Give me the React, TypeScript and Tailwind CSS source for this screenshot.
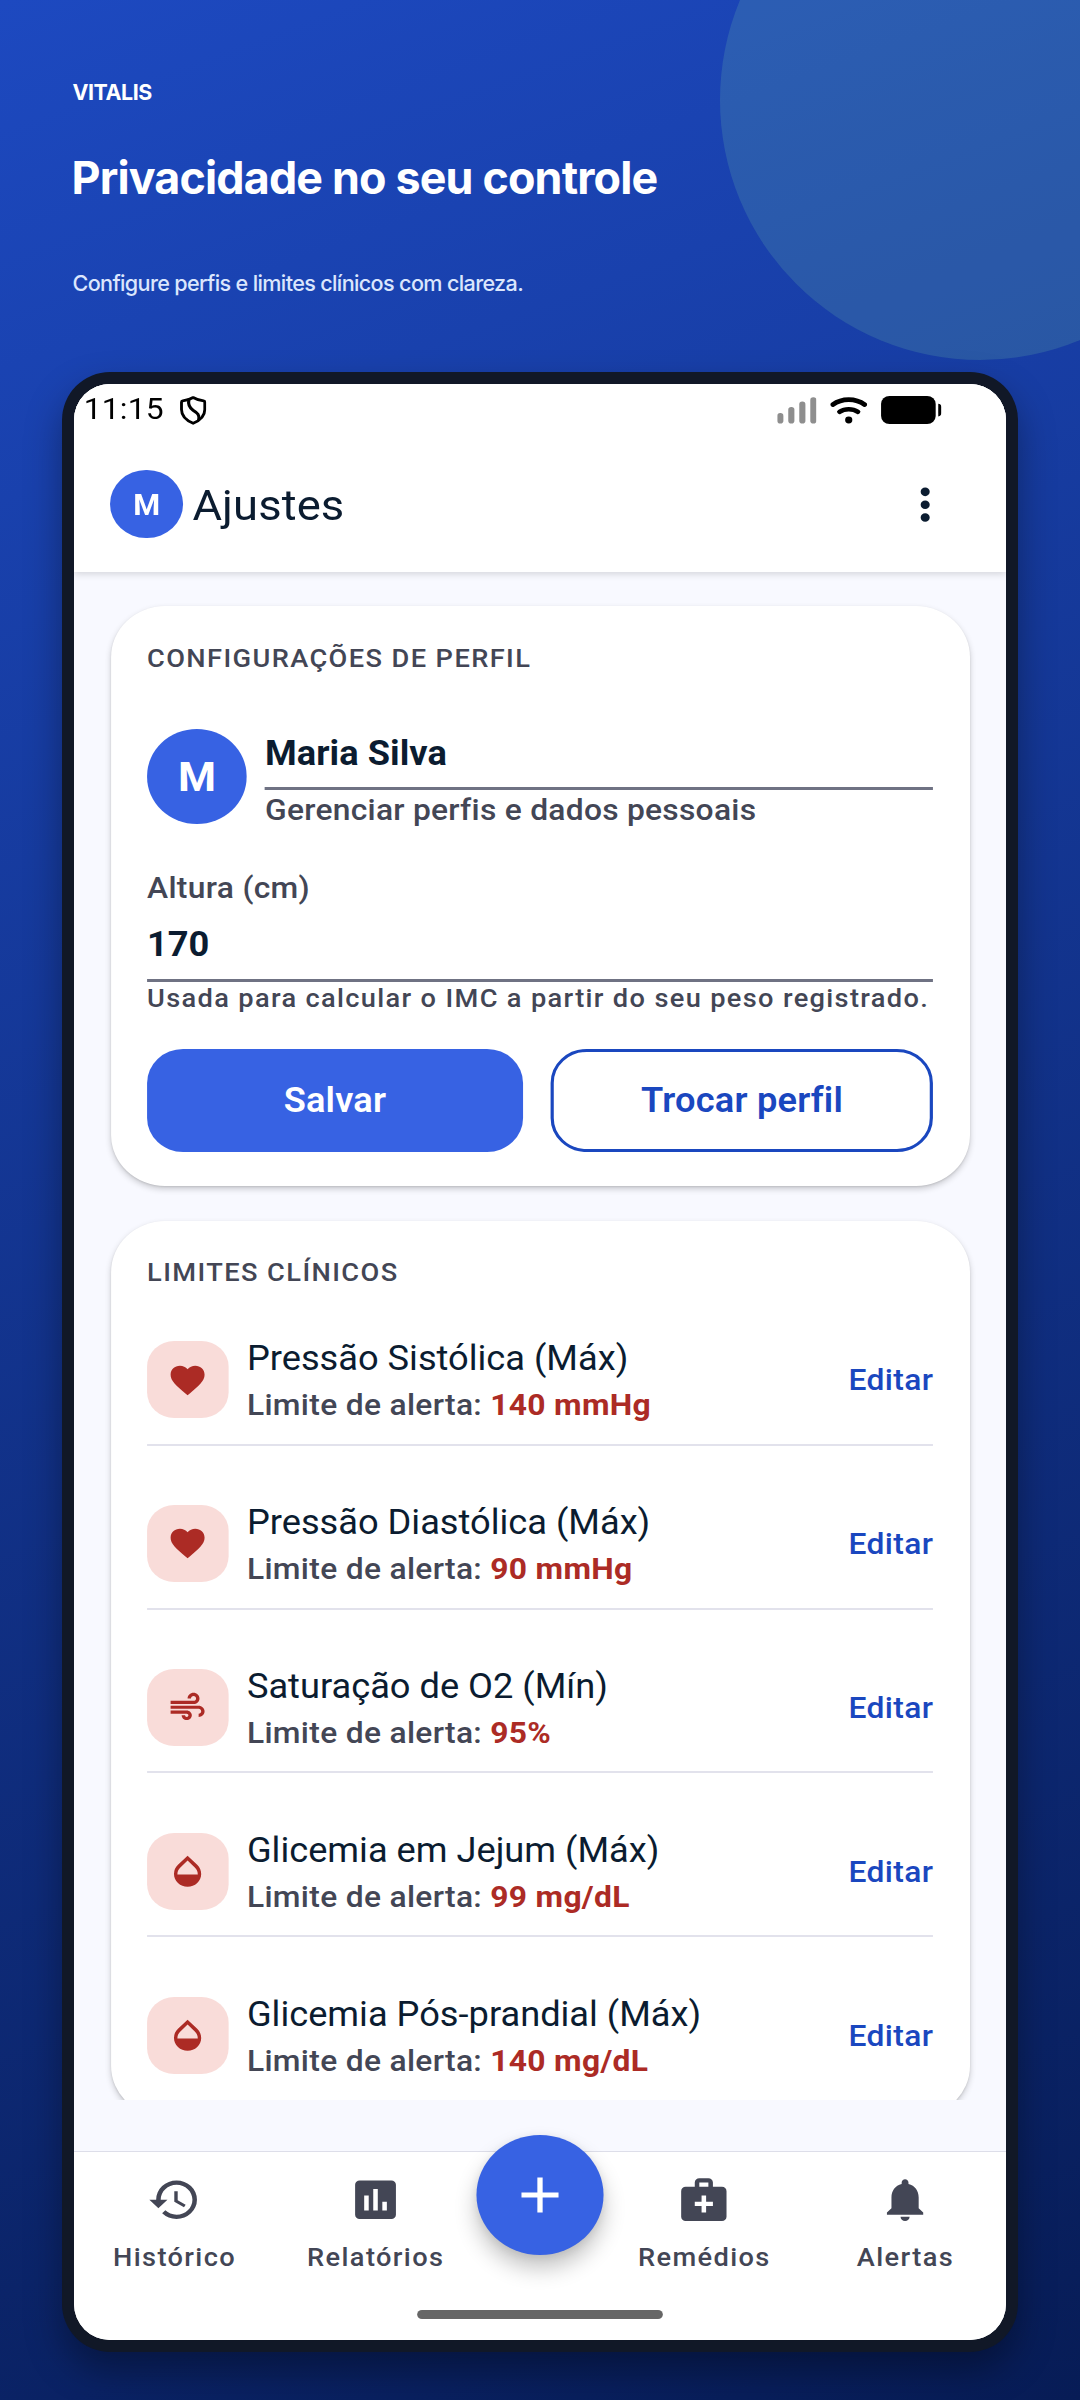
import React from "react";
import type { IconType } from "react-icons";
import {
  MdAdd,
  MdAir,
  MdAssessment,
  MdFavorite,
  MdHistory,
  MdMedicalServices,
  MdMoreVert,
  MdNotifications,
  MdOpacity,
} from "react-icons/md";

type Limit = { title: string; value: string; Icon: IconType };

const limits: Limit[] = [
  { title: "Pressão Sistólica (Máx)", value: "140 mmHg", Icon: MdFavorite },
  { title: "Pressão Diastólica (Máx)", value: "90 mmHg", Icon: MdFavorite },
  { title: "Saturação de O2 (Mín)", value: "95%", Icon: MdAir },
  { title: "Glicemia em Jejum (Máx)", value: "99 mg/dL", Icon: MdOpacity },
  { title: "Glicemia Pós-prandial (Máx)", value: "140 mg/dL", Icon: MdOpacity },
];

function ShieldIcon() {
  return (
    <svg className="h-[29px] w-[25px]" viewBox="0 0 25 29" fill="none" stroke="#000" strokeWidth="2.7" strokeLinejoin="round" strokeLinecap="round">
      <path d="M12.5 1.5 C9.4 3.4 6 4.6 2.6 4.9 Q1.5 5 1.5 6.2 V13.5 C1.5 20 6 24.4 12.5 27.3 C19 24.4 23.5 20 23.5 13.5 V6.2 Q23.5 5 22.4 4.9 C19 4.6 15.6 3.4 12.5 1.5 Z" />
      <path d="M8.4 3.8 C7.6 8.4 8.8 11.6 12.4 14.2 C16.6 17 18.8 19 17.8 23.6" strokeWidth="3" />
    </svg>
  );
}

function StatusIcons() {
  return (
    <div className="flex h-[28px] items-center">
      <svg className="h-[28px] w-[37px]" viewBox="0 0 37 28" fill="#8e8e8e">
        <rect x="0" y="17" width="5.8" height="10.5" rx="2.8" />
        <rect x="10.4" y="11" width="5.8" height="16.5" rx="2.8" />
        <rect x="20.8" y="5.6" width="5.8" height="21.9" rx="2.8" />
        <rect x="31.2" y="1.3" width="5.8" height="26.2" rx="2.8" />
      </svg>
      <svg className="ml-[13px] h-[28px] w-[35px]" viewBox="0 0 35 28" fill="none" stroke="#000" strokeLinecap="round">
        <path d="M2.5 8.6 C11 1.9 24 1.9 32.5 8.6" strokeWidth="4.6" />
        <path d="M8.8 15.8 C13.8 12.3 21.2 12.3 26.2 15.8" strokeWidth="4.6" />
        <circle cx="17.5" cy="24" r="3.4" fill="#000" stroke="none" />
      </svg>
      <svg className="ml-[13px] h-[28px] w-[57px]" viewBox="0 0 57 28" fill="#000">
        <rect x="0" y="0" width="51.6" height="28" rx="8" />
        <path d="M54 7.8 C56 7.8 57 9.4 57 11.2 V17 C57 18.8 56 20.4 54 20.4 Z" />
      </svg>
    </div>
  );
}

function ProfileCard() {
  return (
    <section className="h-[580px] rounded-[51px] bg-white px-[34.4px] pt-[37px] shadow-[0_3px_6px_rgba(0,0,0,0.19),0_1px_2px_rgba(0,0,0,0.1)]">
      <h2 className="text-[25.7px] leading-[30px] font-medium tracking-[1.32px] text-[#434655]">CONFIGURAÇÕES DE PERFIL</h2>
      <div className="mt-[55.6px] flex h-[95px] gap-[17px]">
        <div className="flex h-[95px] w-[94.4px] items-center justify-center rounded-full bg-[#3762e3] text-[41px] leading-none font-bold text-white">
          <span className="pt-[2px]">M</span>
        </div>
        <div className="flex-1 pt-[2.5px]">
          <p className="text-[34.2px] leading-[44px] font-bold tracking-[0.05px] text-[#0b1c30]">Maria Silva</p>
          <div className="mt-[12px] border-t-[3px] border-[#6f7283]" />
          <p className="text-[30px] leading-[40px] font-medium tracking-[0.25px] text-[#434655]">Gerenciar perfis e dados pessoais</p>
        </div>
      </div>
      <p className="mt-[44.4px] text-[30px] leading-[40px] font-medium tracking-[0.3px] text-[#434655]">Altura (cm)</p>
      <p className="mt-[14px] text-[34.2px] leading-[44px] font-bold text-[#0b1c30]">170</p>
      <div className="mt-[13px] border-t-[3px] border-[#6f7283]" />
      <p className="mt-[1px] text-[25.7px] leading-[30px] font-medium tracking-[1.26px] whitespace-nowrap text-[#434655]">
        Usada para calcular o IMC a partir do seu peso registrado.
      </p>
      <div className="mt-[36.5px] flex h-[103px] gap-[26.4px] text-[34.2px] font-semibold tracking-[0.2px]">
        <button className="w-[354.8px] rounded-[34px] bg-[#3762e3] text-white">Salvar</button>
        <button className="flex-1 rounded-[34px] border-[3px] border-[#1a47bf] text-[#1a47bf]">Trocar perfil</button>
      </div>
    </section>
  );
}

function LimitRow({ title, value, Icon, last }: Limit & { last: boolean }) {
  return (
    <li className={last ? "flex h-[163.8px] pt-[54.4px]" : "flex h-[163.8px] border-b-2 border-[#e2e2ec] pt-[54.4px]"}>
      <div className="mt-[5px] flex h-[77px] w-[77px] items-center justify-center rounded-[25.7px] bg-[#f9dcd9] text-[#ac2b25]">
        <Icon size={38.5} />
      </div>
      <div className="ml-[17.3px] flex-1">
        <p className="text-[34.2px] leading-[44px] text-[#0b1c30]">{title}</p>
        <p className="mt-[5px] text-[30px] leading-[40px] font-medium tracking-[0.3px] text-[#434655]">
          Limite de alerta: <span className="font-bold text-[#ac2b25]">{value}</span>
        </p>
      </div>
      <button className="mt-[24px] h-[40px] text-[30px] leading-[40px] font-medium tracking-[0.35px] text-[#1a47bf]">Editar</button>
    </li>
  );
}

function LimitsCard() {
  return (
    <section className="mt-[35px] h-[896px] rounded-[51px] bg-white px-[34.4px] pt-[41px] shadow-[0_3px_6px_rgba(0,0,0,0.19),0_1px_2px_rgba(0,0,0,0.1)]">
      <h2 className="text-[25.7px] leading-[20px] font-medium tracking-[1.34px] text-[#434655]">LIMITES CLÍNICOS</h2>
      <ul>
        {limits.map((l, i) => (
          <LimitRow key={l.title} {...l} last={i === limits.length - 1} />
        ))}
      </ul>
    </section>
  );
}

function NavItem({ label, Icon }: { label: string; Icon: IconType }) {
  return (
    <div className="flex w-[190px] flex-col items-center pt-[22px] text-[#434655]">
      <Icon size={51.4} />
      <span className="mt-[17px] text-[25.7px] leading-[30px] font-medium tracking-[1.3px]">{label}</span>
    </div>
  );
}

function BottomNav() {
  return (
    <nav className="relative flex h-[189px] border-t border-[#dddee9] bg-white">
      <NavItem label="Histórico" Icon={MdHistory} />
      <NavItem label="Relatórios" Icon={MdAssessment} />
      <button className="-mt-[17px] ml-[0.6px] flex h-[120px] w-[119.8px] items-center justify-center rounded-full bg-[#3762e3] text-white shadow-[0_13px_22px_rgba(0,0,0,0.24),0_2px_8px_rgba(0,0,0,0.08)]">
        <MdAdd size={60} />
      </button>
      <NavItem label="Remédios" Icon={MdMedicalServices} />
      <NavItem label="Alertas" Icon={MdNotifications} />
      <div className="absolute top-[158px] left-[324px] h-[9px] w-[232px] rounded-full bg-[#666666]" />
    </nav>
  );
}

export default function App() {
  return (
    <div className="relative h-[2400px] w-[1080px] overflow-hidden bg-[linear-gradient(160deg,#1d49c0_0%,#071c56_100%)]">
      <div className="absolute -top-[160px] left-[720px] h-[520px] w-[520px] rounded-full bg-[#8adfa8]/16" />
      <header className="relative h-[372px] pt-[78px] pl-[72.5px] font-['Inter',sans-serif]">
        <p className="text-[21.4px] leading-[28px] font-bold tracking-[-0.45px] text-white">VITALIS</p>
        <h1 className="mt-[44px] -ml-[1px] text-[44.8px] leading-[56px] font-bold tracking-[-0.83px] text-white">Privacidade no seu controle</h1>
        <p className="mt-[62px] text-[21.6px] leading-[30px] font-medium tracking-[-0.65px] text-[#dbe6fd]">
          Configure perfis e limites clínicos com clareza.
        </p>
      </header>

      <div className="relative ml-[62px] h-[1980px] w-[956px] overflow-visible rounded-[48px] bg-[#111827] p-[12px] shadow-[0_18px_36px_rgba(0,0,0,0.35)]">
        <div className="h-[1956px] w-[932px] overflow-hidden rounded-[36px] bg-white">
          {/* Screen content is laid out 880px wide and widened to fill the frame */}
          <div className="flex h-[1956px] w-[880px] origin-left scale-x-[1.0591] flex-col bg-[#f8f9ff] font-['Roboto',sans-serif]">
            <div className="relative z-10 h-[188px] bg-white shadow-[0_2px_7px_rgba(0,0,0,0.15)]">
              <div className="flex h-[52px] pr-[61px] pl-[9.2px]">
                <span className="pt-[5px] text-[30px] leading-[40px] tracking-[0.2px] text-black">11:15</span>
                <span className="mt-[11.5px] ml-[14.6px]">
                  <ShieldIcon />
                </span>
                <div className="mt-[11.5px] ml-auto">
                  <StatusIcons />
                </div>
              </div>
              <div className="flex h-[136px] items-center pr-[50.5px] pl-[34.4px]">
                <div className="flex h-[68.6px] w-[68.6px] items-center justify-center rounded-full bg-[#3762e3] text-[29px] leading-none font-bold text-white">
                  <span className="pt-[2px]">M</span>
                </div>
                <h2 className="ml-[8.8px] pt-[2px] text-[42.8px] leading-[56px] tracking-[0.13px] text-[#0b1c30]">Ajustes</h2>
                <MdMoreVert size={51.4} className="mt-[1px] ml-auto text-[#0b1c30]" />
              </div>
            </div>
            <main className="h-[1528px] overflow-hidden pt-[34px] pr-[34.2px] pl-[34.6px]">
              <ProfileCard />
              <LimitsCard />
            </main>
            <div className="h-[51px]" />
            <BottomNav />
          </div>
        </div>
      </div>
    </div>
  );
}
